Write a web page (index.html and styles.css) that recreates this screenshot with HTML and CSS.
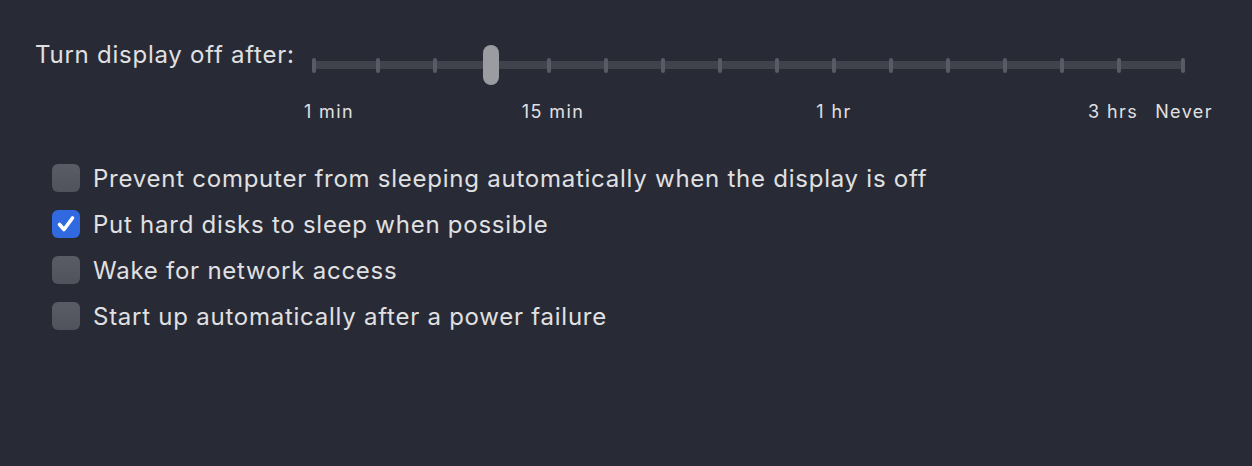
FILE: index.html
```html
<!DOCTYPE html>
<html lang="en">
<head>
  <meta charset="UTF-8">
  <title>Energy Saver</title>
  <link rel="stylesheet" href="styles.css">
</head>
<body>
  <div class="panel">
    <div class="display-row">
      <span class="display-label">Turn display off after:</span>
      <div class="slider">
        <div class="track">
          <span class="tick"></span><span class="tick"></span><span class="tick"></span><span class="tick"></span>
          <span class="tick"></span><span class="tick"></span><span class="tick"></span><span class="tick"></span>
          <span class="tick"></span><span class="tick"></span><span class="tick"></span><span class="tick"></span>
          <span class="tick"></span><span class="tick"></span><span class="tick"></span><span class="tick"></span>
          <span class="thumb"></span>
        </div>
        <div class="scale">
          <span class="mark mark-1min">1 min</span>
          <span class="mark mark-15min">15 min</span>
          <span class="mark mark-1hr">1 hr</span>
          <span class="mark mark-3hrs">3 hrs</span>
          <span class="mark mark-never">Never</span>
        </div>
      </div>
    </div>

    <ul class="options">
      <li class="option"><span class="box"></span>Prevent computer from sleeping automatically when the display is off</li>
      <li class="option"><span class="box checked">
        <svg viewBox="0 0 28 28" width="28" height="28"><path d="M7.5 14.5 L12 19.5 L20.5 8" fill="none" stroke="#fff" stroke-width="3.6" stroke-linecap="round" stroke-linejoin="round"/></svg>
      </span>Put hard disks to sleep when possible</li>
      <li class="option"><span class="box"></span>Wake for network access</li>
      <li class="option"><span class="box"></span>Start up automatically after a power failure</li>
    </ul>
  </div>
</body>
</html>
```

FILE: styles.css
```css
body {
  margin: 0;
  background: #282a35;
  font-family: Inter, "Noto Sans", sans-serif;
  color: #e0e0e2;
  height: 466px;
  overflow: hidden;
}
.panel {
  padding-top: 40px;
}
.display-row {
  display: flex;
  justify-content: space-between;
  padding: 0 67px 0 35px;
}
.display-label {
  font-size: 24px;
  letter-spacing: 0.75px;
  line-height: 30px;
}
.slider {
  width: 873px;
  padding-top: 21px;
}
.track {
  position: relative;
  height: 8px;
  background: #40424c;
  border-radius: 4px;
  display: flex;
  justify-content: space-between;
  align-items: center;
}
.tick {
  width: 4px;
  height: 15px;
  border-radius: 2px;
  background: #585a65;
}
/* end ticks sit a bit further out than the rest */
.tick:first-child {
  margin-right: 7px;
}
.tick:nth-child(16) {
  margin-left: 7px;
}
.thumb {
  position: absolute;
  left: 171px;
  top: -16px;
  width: 16px;
  height: 40px;
  border-radius: 8px;
  background: #9b9ca1;
}
.scale {
  position: relative;
  height: 24px;
  margin-top: 31px;
  font-size: 18px;
  letter-spacing: 1.4px;
}
.mark {
  position: absolute;
  top: 0;
  line-height: 24px;
  transform: translateX(-50%);
  white-space: nowrap;
}
.mark-1min { left: 17px; }
.mark-15min { left: 241px; }
.mark-1hr { left: 522px; }
.mark-3hrs { left: 801px; }
.mark-never { left: 872px; }
.options {
  list-style: none;
  margin: 31px 0 0;
  padding: 0 0 0 52px;
}
.option {
  display: flex;
  align-items: center;
  gap: 13px;
  height: 46px;
  font-size: 24px;
  letter-spacing: 0.75px;
}
.box {
  width: 28px;
  height: 28px;
  border-radius: 6px;
  background: linear-gradient(#5a5c65, #51535c);
  flex-shrink: 0;
}
.box.checked {
  background: #3069e0;
}
.box svg {
  display: block;
}
```
